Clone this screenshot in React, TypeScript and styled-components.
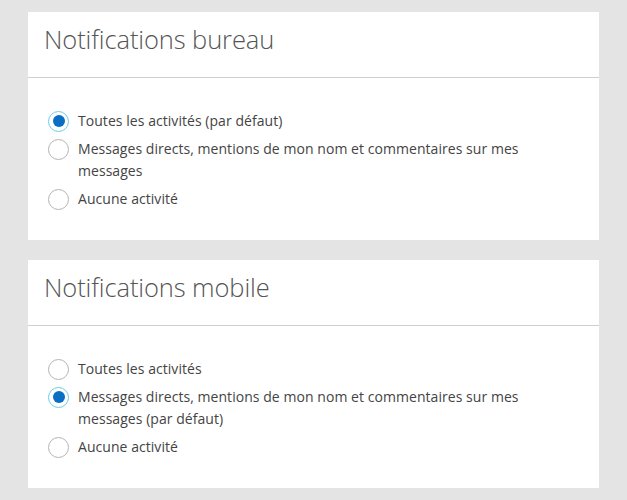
import React, { useState } from 'react';
import styled, { createGlobalStyle } from 'styled-components';

const GlobalStyle = createGlobalStyle`
  html, body {
    margin: 0;
    padding: 0;
    background: #e4e4e4;
  }
  body {
    font-family: "Open Sans", "Liberation Sans", sans-serif;
  }
`;

const Page = styled.div`
  display: flex;
  flex-direction: column;
  gap: 20px;
  padding: 12px 28px 12px 28px;
  width: 571px;
`;

const Card = styled.section`
  background: #fff;
`;

const CardHeader = styled.header`
  box-sizing: border-box;
  height: 66px;
  border-bottom: 1px solid #cfcfcf;
  padding: 10px 16px 0;
`;

const Title = styled.h2`
  margin: 0;
  font-size: 25.5px;
  font-weight: 300;
  color: #555;
  letter-spacing: -0.1px;
`;

const Body = styled.div`
  padding: 32px 40px 30px 20px;
  display: flex;
  flex-direction: column;
  gap: 6px;
`;

const Option = styled.label`
  display: flex;
  align-items: flex-start;
  gap: 9px;
  font-size: 14px;
  line-height: 22px;
  color: #444;
  cursor: pointer;
  letter-spacing: 0.05px;
`;

const Radio = styled.span<{ $checked: boolean }>`
  flex: none;
  box-sizing: border-box;
  width: 21px;
  height: 21px;
  margin-top: 0.5px;
  border-radius: 50%;
  border: 1px solid ${p => (p.$checked ? '#6ccbeb' : '#b4b4b4')};
  display: flex;
  align-items: center;
  justify-content: center;
  &::after {
    content: '';
    width: 12px;
    height: 12px;
    border-radius: 50%;
    background: ${p => (p.$checked ? '#0a6ec4' : 'transparent')};
  }
`;

type Group = { title: string; options: string[]; initial: number };

const groups: Group[] = [
  {
    title: 'Notifications bureau',
    options: [
      'Toutes les activités (par défaut)',
      'Messages directs, mentions de mon nom et commentaires sur mes messages',
      'Aucune activité',
    ],
    initial: 0,
  },
  {
    title: 'Notifications mobile',
    options: [
      'Toutes les activités',
      'Messages directs, mentions de mon nom et commentaires sur mes messages (par défaut)',
      'Aucune activité',
    ],
    initial: 1,
  },
];

const NotificationCard = ({ group }: { group: Group }) => {
  const [selected, setSelected] = useState(group.initial);
  return (
    <Card>
      <CardHeader>
        <Title>{group.title}</Title>
      </CardHeader>
      <Body>
        {group.options.map((opt, i) => (
          <Option key={opt} onClick={() => setSelected(i)}>
            <Radio $checked={selected === i} />
            <span>{opt}</span>
          </Option>
        ))}
      </Body>
    </Card>
  );
};

export default function App() {
  return (
    <Page>
      <GlobalStyle />
      {groups.map(g => (
        <NotificationCard key={g.title} group={g} />
      ))}
    </Page>
  );
}
